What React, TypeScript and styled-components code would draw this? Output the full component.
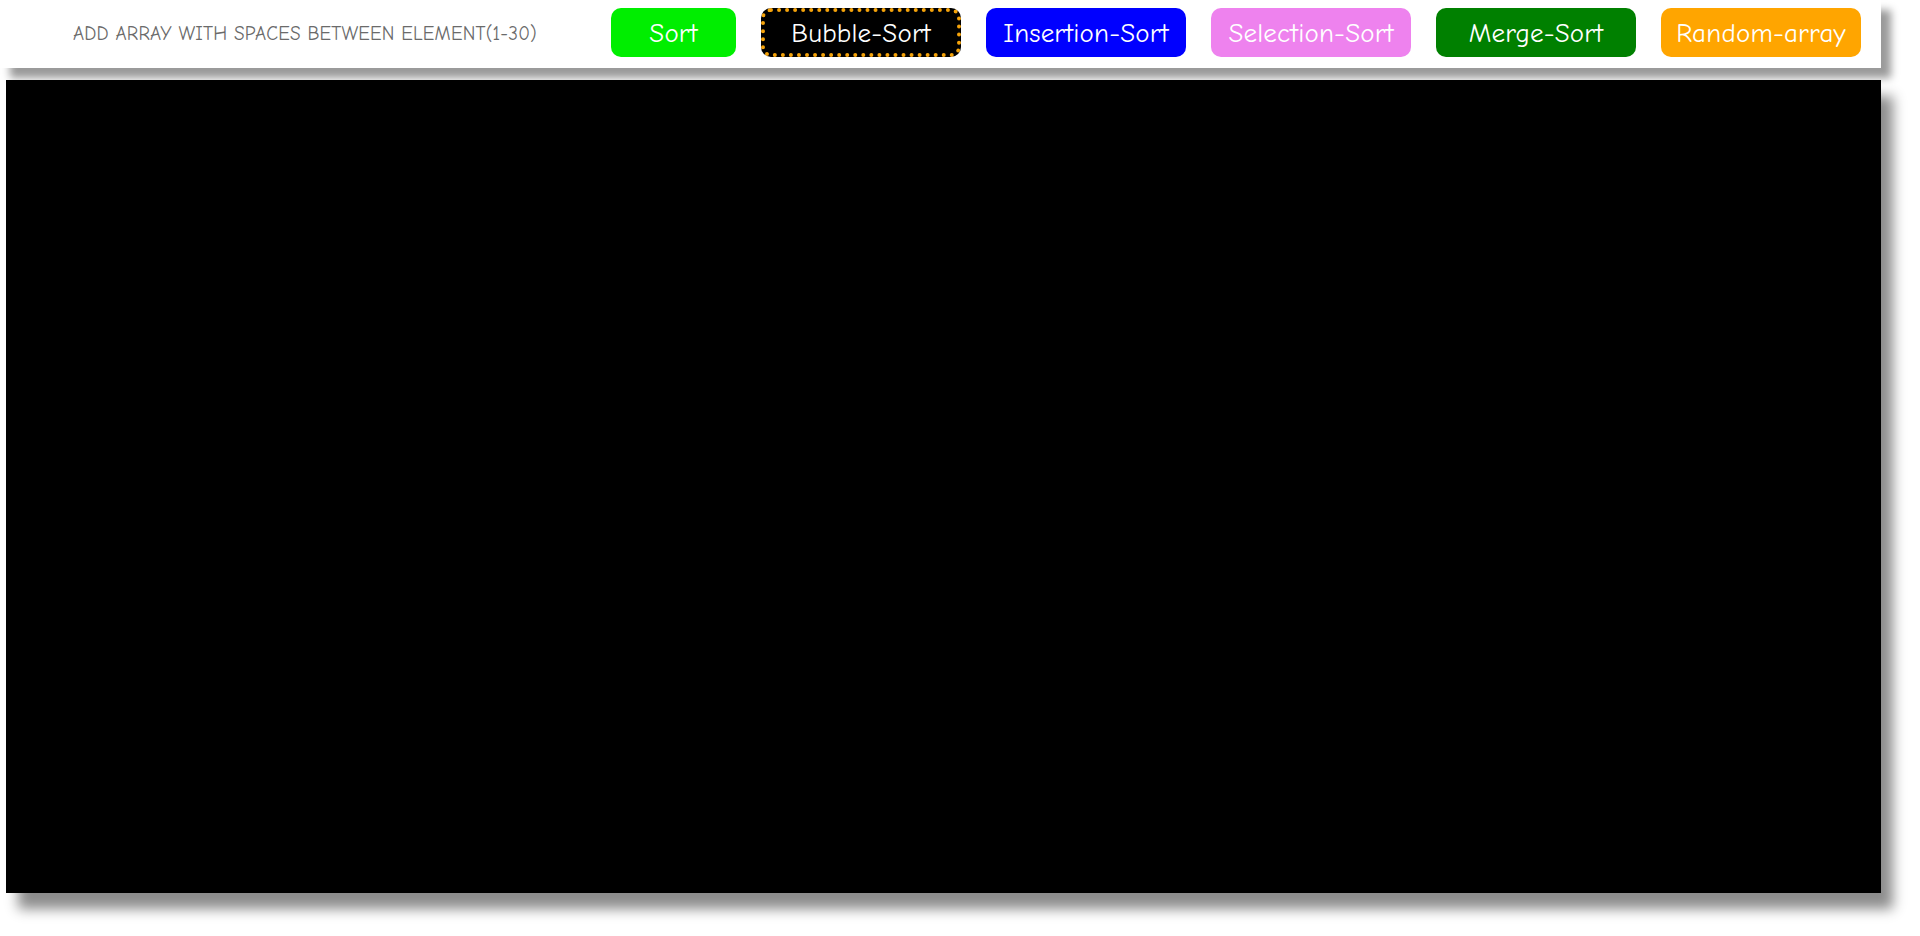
import React from 'react'
import styled, { createGlobalStyle } from 'styled-components'

const GlobalStyle = createGlobalStyle`
  html, body {
    margin: 0;
    padding: 0;
    background: #ffffff;
    font-family: "Comic Sans MS", "Comic Neue", "DejaVu Sans", sans-serif;
  }
`

const Page = styled.div`
  min-height: 936px;
  padding-bottom: 40px;
  box-sizing: border-box;
  overflow: hidden;
`

const Header = styled.div`
  display: flex;
  align-items: flex-start;
  gap: 25px;
  width: 1881px;
  height: 68px;
  box-sizing: border-box;
  padding-top: 8px;
  background: #ffffff;
  box-shadow: 10px 10px 8px rgba(0, 0, 0, 0.4);
  position: relative;
  z-index: 1;
`

const ArrayInput = styled.input`
  margin-left: 70px;
  width: 516px;
  height: 49px;
  box-sizing: border-box;
  padding: 2px 3px 0;
  border: none;
  outline: none;
  background: transparent;
  font-family: inherit;
  font-size: 19.2px;
  letter-spacing: 0.2px;

  &::placeholder {
    color: #6a6a6a;
  }
`

const SortButton = styled.button<{ $bg: string; $fg?: string; $dotted?: boolean; $w?: number }>`
  width: ${(p) => p.$w ?? 200}px;
  height: 49px;
  box-sizing: border-box;
  border-radius: 10px;
  border: ${(p) => (p.$dotted ? '4px dotted #f5a30a' : 'none')};
  background: ${(p) => p.$bg};
  color: ${(p) => p.$fg ?? '#ffffff'};
  font-family: inherit;
  font-size: 27px;
  letter-spacing: 0.2px;
  padding: 2px 0 0;
  cursor: pointer;
`

const Canvas = styled.div`
  margin: 12px 0 0 6px;
  width: 1875px;
  height: 813px;
  background: #000000;
  box-shadow: 12px 16px 12px rgba(0, 0, 0, 0.45);
`

const App: React.FC = () => (
  <Page>
    <GlobalStyle />
    <Header>
      <ArrayInput placeholder="ADD ARRAY WITH SPACES BETWEEN ELEMENT(1-30)" />
      <SortButton $bg="#00ee00" $w={125}>Sort</SortButton>
      <SortButton $bg="#000000" $dotted>Bubble-Sort</SortButton>
      <SortButton $bg="#0000ff">Insertion-Sort</SortButton>
      <SortButton $bg="#ee82ee">Selection-Sort</SortButton>
      <SortButton $bg="#008000">Merge-Sort</SortButton>
      <SortButton $bg="#ffa500">Random-array</SortButton>
    </Header>
    <Canvas />
  </Page>
)

export default App
